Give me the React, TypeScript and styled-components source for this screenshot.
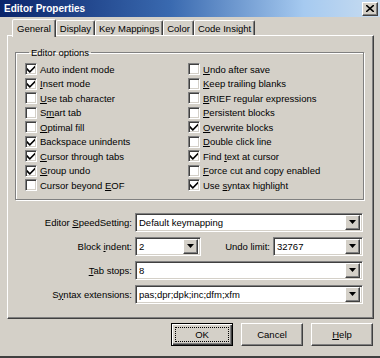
import React from "react";
import styled, { createGlobalStyle, css } from "styled-components";

const GlobalStyle = createGlobalStyle`
  html, body {
    margin: 0;
    padding: 0;
    background: #d4d0c8;
  }
  body {
    font-family: "Liberation Sans", Arial, sans-serif;
    font-size: 9.5px;
    color: #000;
  }
`;

const raised = css`
  border-style: solid;
  border-width: 1px;
  border-color: #fff #404040 #404040 #fff;
  box-shadow: inset -1px -1px 0 #808080, inset 1px 1px 0 #d4d0c8;
`;

const sunken = css`
  border-style: solid;
  border-width: 1px;
  border-color: #808080 #fff #fff #808080;
  box-shadow: inset 1px 1px 0 #404040, inset -1px -1px 0 #d4d0c8;
`;

const Window = styled.div`
  width: 380px;
  height: 358px;
  box-sizing: border-box;
  display: flex;
  flex-direction: column;
  background: #d4d0c8;
  border-bottom: 2px solid #404040;
  overflow: hidden;
`;

const TitleBar = styled.div`
  height: 17px;
  flex: none;
  display: flex;
  align-items: center;
  justify-content: space-between;
  padding: 0 2px 0 4px;
  background: linear-gradient(90deg, #0a246a 0%, #3a6ab0 45%, #a6caf0 80%, #c8dcf0 100%);
`;

const Title = styled.span`
  color: #fff;
  font-weight: bold;
  font-size: 10px;
`;

const CloseButton = styled.div`
  ${raised};
  width: 16px;
  height: 14px;
  box-sizing: border-box;
  background: #d4d0c8;
  display: flex;
  align-items: center;
  justify-content: center;
`;

const Body = styled.div`
  flex: 1;
  display: flex;
  flex-direction: column;
  padding: 2px 6px 0 7px;
`;

const TabStrip = styled.div`
  height: 16px;
  display: flex;
  align-items: flex-end;
  padding-left: 5px;
  position: relative;
  z-index: 1;
`;

const Tab = styled.div<{ $active?: boolean }>`
  box-sizing: border-box;
  height: ${(p) => (p.$active ? 18 : 15)}px;
  margin-bottom: ${(p) => (p.$active ? -2 : 0)}px;
  padding: 0 ${(p) => (p.$active ? 4 : 3)}px;
  background: #d4d0c8;
  border-style: solid;
  border-width: 1px 1px 0 1px;
  border-color: #fff #404040 transparent #fff;
  box-shadow: inset -1px 0 0 #808080;
  border-radius: 2px 2px 0 0;
  display: flex;
  align-items: center;
  white-space: nowrap;
`;

const Panel = styled.div`
  height: 284px;
  box-sizing: border-box;
  ${raised};
  display: flex;
  flex-direction: column;
  padding: 11px 9px 0 7px;
`;

const GroupBox = styled.fieldset`
  margin: 0;
  padding: 4px 0 6px 9px;
  border: 1px solid #808080;
  box-shadow: 1px 1px 0 #fff, inset 1px 1px 0 #fff;
  min-width: 0;
`;

const Legend = styled.legend`
  padding: 0 2px;
  margin-left: 4px;
  line-height: 11px;
`;

const CheckGrid = styled.div`
  display: grid;
  grid-template-columns: 163px 1fr;
  grid-auto-flow: column;
  grid-template-rows: repeat(9, 14.5px);
`;

const CheckRow = styled.label`
  display: flex;
  align-items: center;
  gap: 3px;
  white-space: nowrap;
`;

const Box = styled.span`
  ${sunken};
  width: 12px;
  height: 12px;
  box-sizing: border-box;
  background: #fff;
  display: flex;
  align-items: center;
  justify-content: center;
  flex: none;
`;

const Form = styled.div`
  display: flex;
  flex-direction: column;
  gap: 5px;
  margin-top: 13px;
  padding-right: 1px;
`;

const FormRow = styled.div`
  display: flex;
  align-items: center;
  gap: 3px;
`;

const Label = styled.span<{ $width?: number }>`
  width: ${(p) => (p.$width ? `${p.$width}px` : "auto")};
  flex: ${(p) => (p.$width ? "none" : 1)};
  text-align: right;
  white-space: nowrap;
`;

const Combo = styled.div<{ $width?: number }>`
  ${sunken};
  box-sizing: border-box;
  height: 19px;
  width: ${(p) => (p.$width ? `${p.$width}px` : "auto")};
  flex: ${(p) => (p.$width ? "none" : 1)};
  background: #fff;
  display: flex;
  align-items: center;
  padding: 2px 2px 2px 3px;
`;

const ComboValue = styled.span`
  flex: 1;
  white-space: nowrap;
  overflow: hidden;
`;

const DropButton = styled.span`
  ${raised};
  box-sizing: border-box;
  width: 15px;
  height: 15px;
  background: #d4d0c8;
  display: flex;
  align-items: center;
  justify-content: center;
  flex: none;
`;

const ButtonRow = styled.div`
  display: flex;
  justify-content: flex-end;
  gap: 8px;
  padding: 4px 1px 0 0;
`;

const Button = styled.div<{ $default?: boolean }>`
  box-sizing: border-box;
  width: 62px;
  height: 23px;
  background: #d4d0c8;
  display: flex;
  align-items: center;
  justify-content: center;
  position: relative;
  ${(p) =>
    p.$default
      ? css`
          border: 1px solid #000;
          box-shadow: inset 1px 1px 0 #fff, inset -1px -1px 0 #404040,
            inset -2px -2px 0 #808080;
          &::after {
            content: "";
            position: absolute;
            inset: 3px;
            border: 1px dotted #000;
          }
        `
      : raised};
`;

const Check = () => (
  <svg width="8" height="8" viewBox="0 0 7 7">
    <path d="M0 2.5 L2.5 5 L7 0.5 L7 2.5 L2.5 7 L0 4.5 Z" fill="#000" />
  </svg>
);

const Arrow = () => (
  <svg width="7" height="4" viewBox="0 0 7 4">
    <path d="M0 0 H7 L3.5 4 Z" fill="#000" />
  </svg>
);

type Opt = { label: React.ReactNode; checked?: boolean };

const options: Opt[] = [
  { label: "Auto indent mode", checked: true },
  { label: <><u>I</u>nsert mode</>, checked: true },
  { label: <><u>U</u>se tab character</> },
  { label: <>S<u>m</u>art tab</> },
  { label: <><u>O</u>ptimal fill</> },
  { label: "Backspace unindents", checked: true },
  { label: <><u>C</u>ursor through tabs</>, checked: true },
  { label: <><u>G</u>roup undo</>, checked: true },
  { label: <>Cursor beyond <u>E</u>OF</> },
  { label: <><u>U</u>ndo after save</> },
  { label: <><u>K</u>eep trailing blanks</> },
  { label: <><u>B</u>RIEF regular expressions</> },
  { label: <><u>P</u>ersistent blocks</> },
  { label: <><u>O</u>verwrite blocks</>, checked: true },
  { label: <><u>D</u>ouble click line</> },
  { label: <>Find <u>t</u>ext at cursor</>, checked: true },
  { label: <><u>F</u>orce cut and copy enabled</> },
  { label: <>Use <u>s</u>yntax highlight</>, checked: true },
];

const tabs = ["General", "Display", "Key Mappings", "Color", "Code Insight"];

export default function App() {
  return (
    <>
      <GlobalStyle />
      <Window>
        <TitleBar>
          <Title>Editor Properties</Title>
          <CloseButton>
            <svg width="8" height="7" viewBox="0 0 8 7">
              <path d="M0 0 L8 7 M8 0 L0 7" stroke="#000" strokeWidth="1.6" />
            </svg>
          </CloseButton>
        </TitleBar>
        <Body>
          <TabStrip>
            {tabs.map((t, i) => (
              <Tab key={t} $active={i === 0}>
                {t}
              </Tab>
            ))}
          </TabStrip>
          <Panel>
            <GroupBox>
              <Legend>Editor options</Legend>
              <CheckGrid>
                {options.map((o, i) => (
                  <CheckRow key={i}>
                    <Box>{o.checked && <Check />}</Box>
                    <span>{o.label}</span>
                  </CheckRow>
                ))}
              </CheckGrid>
            </GroupBox>
            <Form>
              <FormRow>
                <Label $width={117}>
                  Editor <u>S</u>peedSetting:
                </Label>
                <Combo>
                  <ComboValue>Default keymapping</ComboValue>
                  <DropButton>
                    <Arrow />
                  </DropButton>
                </Combo>
              </FormRow>
              <FormRow>
                <Label $width={117}>
                  Block <u>i</u>ndent:
                </Label>
                <Combo $width={66}>
                  <ComboValue>2</ComboValue>
                  <DropButton>
                    <Arrow />
                  </DropButton>
                </Combo>
                <Label>Undo limit:</Label>
                <Combo $width={90}>
                  <ComboValue>32767</ComboValue>
                  <DropButton>
                    <Arrow />
                  </DropButton>
                </Combo>
              </FormRow>
              <FormRow>
                <Label $width={117}>
                  <u>T</u>ab stops:
                </Label>
                <Combo>
                  <ComboValue>8</ComboValue>
                  <DropButton>
                    <Arrow />
                  </DropButton>
                </Combo>
              </FormRow>
              <FormRow>
                <Label $width={117}>
                  S<u>y</u>ntax extensions:
                </Label>
                <Combo>
                  <ComboValue>pas;dpr;dpk;inc;dfm;xfm</ComboValue>
                  <DropButton>
                    <Arrow />
                  </DropButton>
                </Combo>
              </FormRow>
            </Form>
          </Panel>
          <ButtonRow>
            <Button $default>OK</Button>
            <Button>Cancel</Button>
            <Button>
              <span>
                <u>H</u>elp
              </span>
            </Button>
          </ButtonRow>
        </Body>
      </Window>
    </>
  );
}
